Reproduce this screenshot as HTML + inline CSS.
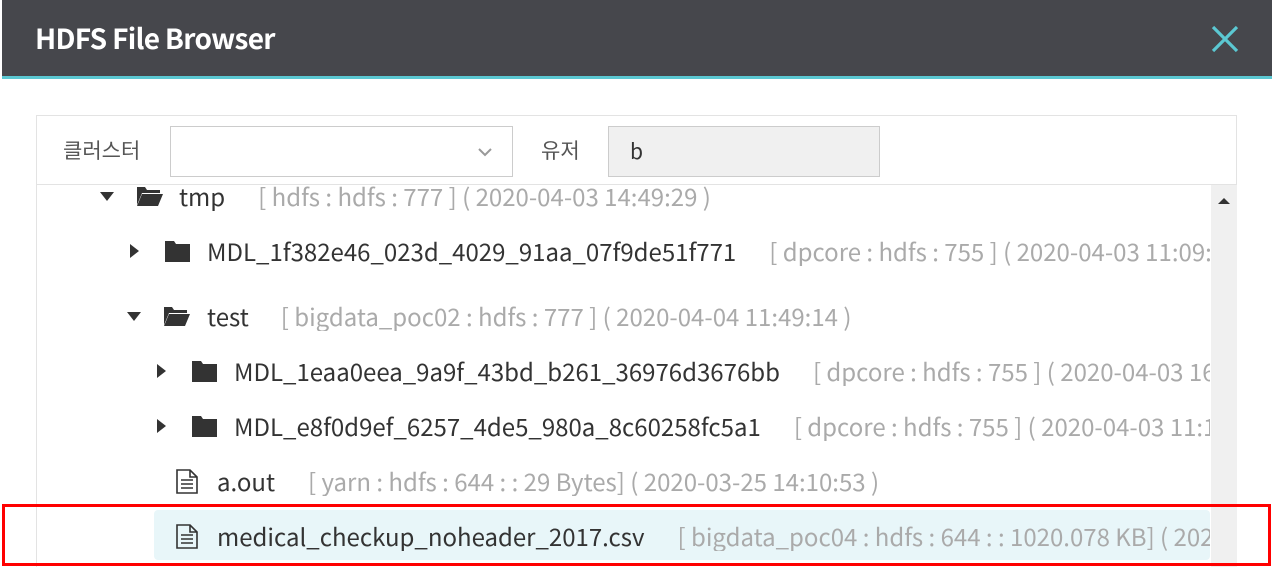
<!DOCTYPE html>
<html><head><meta charset="utf-8"><style>
*{margin:0;padding:0;box-sizing:border-box}
html,body{width:1272px;height:567px;overflow:hidden}
body{background:#fff;position:relative;font-family:"Noto Sans CJK KR","Liberation Sans",sans-serif;color:#333}
.hdr{position:absolute;left:2px;top:0;width:1270px;height:79px;background:#46474c;border-bottom:3px solid #5bc8d2}
.hdr h1{position:absolute;left:33px;top:18px;color:#fff;font-size:28px;font-weight:700;letter-spacing:-0.7px;line-height:40px}
.x{position:absolute;left:1208px;top:24px}
.panel{position:absolute;left:36px;top:115px;width:1201px;height:452px;border:1px solid #e3e3e3;border-bottom:none}
.filter{position:absolute;left:0;top:0;width:1199px;height:69px;border-bottom:1px solid #e3e3e3;background:#fff;z-index:2}
.lbl{position:absolute;top:20px;font-size:21px;color:#555;line-height:28px}
.sel{position:absolute;left:133px;top:10px;width:343px;height:51px;border:1px solid #ccc;background:#fff}
.inp{position:absolute;left:571px;top:10px;width:272px;height:51px;border:1px solid #ccc;background:#f0f0f0;font-size:21px;line-height:49px;padding-left:21px}
.sb{position:absolute;left:1174px;top:69px;width:26px;height:400px;background:#f0f0f0}
.row{position:absolute;white-space:nowrap;font-size:24px;line-height:30px;letter-spacing:0;height:30px;overflow:hidden}
.m{color:#aaa;margin-left:30px}
.hl{position:absolute;left:154px;top:510px;width:1056px;height:50px;background:#e8f6f9;border-radius:4px}
.red{position:absolute;left:2px;top:504px;width:1269px;height:62px;border:3px solid #f00}
</style></head><body>
<div class="hdr"><h1>HDFS File Browser</h1>
<svg class="x" width="30" height="30" viewBox="0 0 30 30"><path d="M3 3L27 27M27 3L3 27" stroke="#5bc8d2" stroke-width="3.2"/></svg></div>
<div class="panel">
<div class="filter">
<div class="lbl" style="left:26px">클러스터</div>
<div class="sel"><svg style="position:absolute;left:306px;top:20px" width="16" height="10" viewBox="0 0 16 10"><path d="M2 2L8 8L14 2" stroke="#999" stroke-width="2" fill="none"/></svg></div>
<div class="lbl" style="left:504px">유저</div>
<div class="inp">b</div>
</div>
<div class="sb"><svg style="position:absolute;left:7px;top:12px" width="12" height="8"><path d="M0 7L6 1L12 7Z" fill="#333"/></svg></div>
</div>
<div class="hl"></div>
<svg style="position:absolute;left:100px;top:192px" width="14" height="10"><path d="M0 0H14L7 9Z" fill="#333"/></svg>
<svg style="position:absolute;left:136px;top:185px" width="28" height="22" viewBox="0 0 28 22"><path d="M1 2H9L11 5H24V8H6L1 20Z M6 9H27L22 21H1Z" fill="#333"/></svg>
<div class="row" style="left:179px;top:181px;width:1030px">tmp<span class="m" style="margin-left:33px">[ hdfs : hdfs : 777 ] ( 2020-04-03 14:49:29 )</span></div>
<svg style="position:absolute;left:130px;top:244px" width="10" height="14"><path d="M0 0V14L9 7Z" fill="#333"/></svg>
<svg style="position:absolute;left:165px;top:240px" width="25" height="22"><path d="M0 1H9L11 4H25V22H0Z" fill="#333"/></svg>
<div class="row" style="left:207px;top:236px;width:1003px">MDL_1f382e46_023d_4029_91aa_07f9de51f771<span class="m" style="margin-left:33px">[ dpcore : hdfs : 755 ] ( 2020-04-03 11:09:51 )</span></div>
<svg style="position:absolute;left:127px;top:312px" width="14" height="10"><path d="M0 0H14L7 9Z" fill="#333"/></svg>
<svg style="position:absolute;left:163px;top:305px" width="28" height="22" viewBox="0 0 28 22"><path d="M1 2H9L11 5H24V8H6L1 20Z M6 9H27L22 21H1Z" fill="#333"/></svg>
<div class="row" style="left:207px;top:301px;width:1003px">test<span class="m" style="margin-left:32px">[ bigdata_poc02 : hdfs : 777 ] ( 2020-04-04 11:49:14 )</span></div>
<svg style="position:absolute;left:157px;top:364px" width="10" height="14"><path d="M0 0V14L9 7Z" fill="#333"/></svg>
<svg style="position:absolute;left:192px;top:360px" width="25" height="22"><path d="M0 1H9L11 4H25V22H0Z" fill="#333"/></svg>
<div class="row" style="left:234px;top:356px;width:976px">MDL_1eaa0eea_9a9f_43bd_b261_36976d3676bb<span class="m" style="margin-left:33px">[ dpcore : hdfs : 755 ] ( 2020-04-03 16:00:00 )</span></div>
<svg style="position:absolute;left:157px;top:419px" width="10" height="14"><path d="M0 0V14L9 7Z" fill="#333"/></svg>
<svg style="position:absolute;left:192px;top:415px" width="25" height="22"><path d="M0 1H9L11 4H25V22H0Z" fill="#333"/></svg>
<div class="row" style="left:234px;top:411px;width:976px">MDL_e8f0d9ef_6257_4de5_980a_8c60258fc5a1<span class="m" style="margin-left:33px">[ dpcore : hdfs : 755 ] ( 2020-04-03 11:10:00 )</span></div>
<svg style="position:absolute;left:176px;top:469px" width="22" height="25" viewBox="0 0 22 25"><path d="M1 1H14L21 8V24H1Z M14 1V8H21 M5 11H17M5 15H17M5 19H17" stroke="#333" stroke-width="1.6" fill="none"/></svg>
<div class="row" style="left:217px;top:466px;width:993px">a.out<span class="m" style="margin-left:33px">[ yarn : hdfs : 644 : : 29 Bytes] ( 2020-03-25 14:10:53 )</span></div>
<svg style="position:absolute;left:176px;top:524px" width="22" height="25" viewBox="0 0 22 25"><path d="M1 1H14L21 8V24H1Z M14 1V8H21 M5 11H17M5 15H17M5 19H17" stroke="#333" stroke-width="1.6" fill="none"/></svg>
<div class="row" style="left:217px;top:521px;width:993px">medical_checkup_noheader_2017.csv<span class="m" style="margin-left:33px">[ bigdata_poc04 : hdfs : 644 : : 1020.078 KB] ( 2020-04-04 )</span></div>
<div class="red"></div>
</body></html>
